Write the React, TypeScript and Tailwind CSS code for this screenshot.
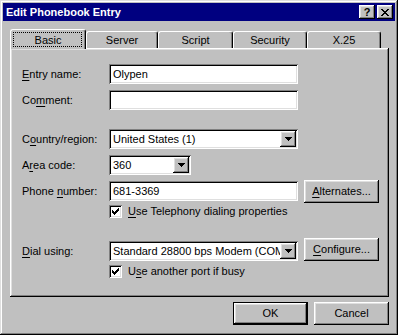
import React from "react";

const raised =
  "shadow-[inset_-1px_-1px_#000,inset_1px_1px_#fff,inset_-2px_-2px_#808080,inset_2px_2px_#dfdfdf]";
const sunken =
  "shadow-[inset_1px_1px_#808080,inset_-1px_-1px_#fff,inset_2px_2px_#000,inset_-2px_-2px_#dfdfdf]";

function U({ children }: { children: React.ReactNode }) {
  return <span className="underline underline-offset-[2px]">{children}</span>;
}

function Arrow() {
  return (
    <svg width="7" height="4" viewBox="0 0 7 4" shapeRendering="crispEdges">
      <path d="M0 0h7v1H0z M1 1h5v1H1z M2 2h3v1H2z M3 3h1v1H3z" fill="#000" />
    </svg>
  );
}

function Check() {
  return (
    <svg width="7" height="7" viewBox="0 0 7 7" shapeRendering="crispEdges">
      <path
        d="M6 0h1v1h-1z M5 1h2v1h-2z M0 2h1v1H0z M4 2h3v1H4z M0 3h2v1H0z M3 3h3v1H3z M0 4h5v1H0z M1 5h3v1H1z M2 6h1v1H2z"
        fill="#000"
      />
    </svg>
  );
}

function Field({ value, width }: { value?: string; width: string }) {
  return (
    <div className={`${width} h-[20px] bg-white ${sunken} flex items-center px-[4px] whitespace-nowrap overflow-hidden`}>
      {value}
    </div>
  );
}

function Select({ value, width }: { value: string; width: string }) {
  return (
    <div className={`${width} h-[20px] bg-white ${sunken} flex items-center p-[2px]`}>
      <span className="flex-1 overflow-hidden whitespace-nowrap pl-[2px]">{value}</span>
      <div className={`w-[16px] h-[16px] shrink-0 bg-[#c0c0c0] ${raised} flex items-center justify-center`}>
        <Arrow />
      </div>
    </div>
  );
}

function Button({ children, isDefault }: { children: React.ReactNode; isDefault?: boolean }) {
  if (isDefault) {
    return (
      <div className="w-[75px] h-[23px] border border-black">
        <div className={`w-full h-full bg-[#c0c0c0] ${raised} flex items-center justify-center`}>{children}</div>
      </div>
    );
  }
  return (
    <div className={`w-[75px] h-[23px] shrink-0 bg-[#c0c0c0] ${raised} flex items-center justify-center`}>
      {children}
    </div>
  );
}

function CheckBox({ children }: { children: React.ReactNode }) {
  return (
    <div className="flex items-center h-[13px] gap-[6px]">
      <div className={`w-[13px] h-[13px] bg-white ${sunken} flex items-center justify-center`}>
        <Check />
      </div>
      <span>{children}</span>
    </div>
  );
}

function Row({ label, children }: { label: React.ReactNode; children: React.ReactNode }) {
  return (
    <div className="flex items-center h-[20px]">
      <div className="w-[87px] shrink-0">{label}</div>
      {children}
    </div>
  );
}

const tabs = [
  { name: "Server", w: "w-[72px]" },
  { name: "Script", w: "w-[75px]" },
  { name: "Security", w: "w-[74px]" },
  { name: "X.25", w: "w-[74px]" },
];

export default function App() {
  return (
    <div
      className={`w-[398px] h-[335px] bg-[#c0c0c0] p-[3px] shadow-[inset_-1px_-1px_#000,inset_1px_1px_#dfdfdf,inset_-2px_-2px_#808080,inset_2px_2px_#fff] font-['Liberation_Sans',Arial,sans-serif] text-[11px] text-black leading-none`}
    >
      <div className="h-[18px] bg-[#000080] flex items-center pl-[3px] pr-[2px]">
        <span className="text-white font-bold text-[11px] flex-1">Edit Phonebook Entry</span>
        <div className={`w-[16px] h-[14px] bg-[#c0c0c0] ${raised} flex items-center justify-center font-bold text-[11px]`}>
          ?
        </div>
        <div className={`ml-[2px] w-[16px] h-[14px] bg-[#c0c0c0] ${raised} flex items-center justify-center`}>
          <svg width="8" height="7" viewBox="0 0 8 7" shapeRendering="crispEdges">
            <path
              d="M0 0h2v1H0z M6 0h2v1H6z M1 1h2v1H1z M5 1h2v1H5z M2 2h4v1H2z M3 3h2v1H3z M2 4h4v1H2z M1 5h2v1H1z M5 5h2v1H5z M0 6h2v1H0z M6 6h2v1H6z"
              fill="#000"
            />
          </svg>
        </div>
      </div>

      <div className="ml-[7px] mt-[8px] w-[379px]">
        <div className="flex items-end h-[19px]">
          <div className="relative z-10 w-[76px] h-[20px] -mb-[1px] bg-[#c0c0c0] rounded-t-[3px] border-t border-l border-white border-r border-r-black shadow-[inset_-1px_0_#808080] flex items-start justify-center pt-[5px]">
            Basic
            <div className="absolute left-[2px] right-[3px] top-[2px] bottom-[2px] border border-dotted border-black" />
          </div>
          {tabs.map((t) => (
            <div
              key={t.name}
              className={`${t.w} h-[17px] bg-[#c0c0c0] rounded-t-[3px] border-t border-l border-white border-r border-r-black shadow-[inset_-1px_0_#808080] flex items-center justify-center pt-[1px]`}
            >
              {t.name}
            </div>
          ))}
        </div>

        <div className={`h-[249px] ${raised} pl-[12px] pt-[16px] flex flex-col`}>
          <Row
            label={
              <>
                <U>E</U>ntry name:
              </>
            }
          >
            <Field value="Olypen" width="w-[189px]" />
          </Row>
          <div className="mt-[6px]">
            <Row
              label={
                <>
                  Co<U>m</U>ment:
                </>
              }
            >
              <Field width="w-[189px]" />
            </Row>
          </div>
          <div className="mt-[19px]">
            <Row
              label={
                <>
                  C<U>o</U>untry/region:
                </>
              }
            >
              <Select value="United States (1)" width="w-[189px]" />
            </Row>
          </div>
          <div className="mt-[6px]">
            <Row
              label={
                <>
                  A<U>r</U>ea code:
                </>
              }
            >
              <Select value="360" width="w-[82px]" />
            </Row>
          </div>
          <div className="mt-[6px]">
            <Row
              label={
                <>
                  Phone <U>n</U>umber:
                </>
              }
            >
              <Field value="681-3369" width="w-[189px]" />
              <div className="ml-[6px]">
                <Button>
                  <U>A</U>lternates...
                </Button>
              </div>
            </Row>
          </div>
          <div className="mt-[4px] ml-[87px]">
            <CheckBox>
              <U>U</U>se Telephony dialing properties
            </CheckBox>
          </div>
          <div className="mt-[23px]">
            <Row
              label={
                <>
                  <U>D</U>ial using:
                </>
              }
            >
              <Select value="Standard 28800 bps Modem (COM1)" width="w-[189px]" />
              <div className="ml-[6px] -mt-[3px]">
                <Button>
                  <U>C</U>onfigure...
                </Button>
              </div>
            </Row>
          </div>
          <div className="mt-[4px] ml-[87px]">
            <CheckBox>
              U<U>s</U>e another port if busy
            </CheckBox>
          </div>
        </div>
      </div>

      <div className="flex justify-end gap-[6px] mt-[5px] pr-[6px]">
        <Button isDefault>OK</Button>
        <Button>Cancel</Button>
      </div>
    </div>
  );
}
